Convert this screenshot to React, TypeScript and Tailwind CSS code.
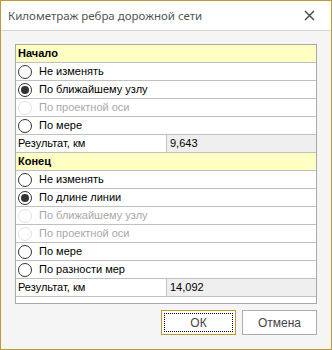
import React from 'react';

type Opt = { label: string; checked?: boolean; disabled?: boolean };

const startOpts: Opt[] = [
  { label: 'Не изменять' },
  { label: 'По ближайшему узлу', checked: true },
  { label: 'По проектной оси', disabled: true },
  { label: 'По мере' },
];

const endOpts: Opt[] = [
  { label: 'Не изменять' },
  { label: 'По длине линии', checked: true },
  { label: 'По ближайшему узлу', disabled: true },
  { label: 'По проектной оси', disabled: true },
  { label: 'По мере' },
  { label: 'По разности мер' },
];

function Radio({ checked, disabled }: { checked?: boolean; disabled?: boolean }) {
  return (
    <span
      className={`w-[14px] h-[14px] rounded-full border flex items-center justify-center bg-white ${
        disabled ? 'border-[#e2e2e2]' : 'border-[#333]'
      }`}
    >
      {checked && <span className="w-[8px] h-[8px] rounded-full bg-[#333]" />}
    </span>
  );
}

function Header({ title }: { title: string }) {
  return (
    <div className="h-[18px] border-b border-[#c0c0c0] bg-[#ffffc4] pl-[2px] flex items-center font-bold text-black">
      {title}
    </div>
  );
}

function OptionRow({ o }: { o: Opt }) {
  return (
    <div className="h-[18px] border-b border-[#c0c0c0] flex items-center pl-[2px] gap-[7px]">
      <Radio checked={o.checked} disabled={o.disabled} />
      <span className={o.disabled ? 'text-[#a8a8a8]' : 'text-black'}>{o.label}</span>
    </div>
  );
}

function ResultRow({ value }: { value: string }) {
  return (
    <div className="h-[18px] border-b border-[#c0c0c0] flex">
      <div className="w-[151px] border-r border-[#c0c0c0] pl-[2px] flex items-center">Результат, км</div>
      <div className="flex-1 bg-[#efefef] pl-[3px] flex items-center">{value}</div>
    </div>
  );
}

export default function App() {
  return (
    <div className="w-[332px] h-[350px] border border-[#bf9a30] bg-[#f5f5f5] flex flex-col font-['Liberation_Sans',sans-serif]">
      <div className="h-[30px] bg-white border-b border-[#d4d4d4] flex items-center justify-between pl-[7px] pr-[16px]">
        <span className="text-[11.5px] text-[#555] font-['Noto_Sans',sans-serif]">Километраж ребра дорожной сети</span>
        <svg width="11" height="11" viewBox="0 0 11 11">
          <path d="M1 1L10 10M10 1L1 10" stroke="#444" strokeWidth="1.4" />
        </svg>
      </div>

      <div className="ml-[14px] mt-[13px] w-[302px] border border-[#a8a8a8] bg-white text-[11px] leading-none">
        <Header title="Начало" />
        {startOpts.map((o) => (
          <OptionRow key={'s' + o.label} o={o} />
        ))}
        <ResultRow value="9,643" />
        <Header title="Конец" />
        {endOpts.map((o) => (
          <OptionRow key={'e' + o.label} o={o} />
        ))}
        <ResultRow value="14,092" />
        <div className="h-[6px]" />
      </div>

      <div className="flex justify-end gap-[6px] mr-[14px] mt-[6px] text-[12px]">
        <button className="w-[75px] h-[25px] bg-white border border-[#bf9a30] p-[2px]">
          <span className="w-full h-full border border-dotted border-black flex items-center justify-center text-[#444]">
            ОК
          </span>
        </button>
        <button className="w-[75px] h-[25px] bg-white border border-[#adadad] flex items-center justify-center text-[#444]">
          Отмена
        </button>
      </div>
    </div>
  );
}
